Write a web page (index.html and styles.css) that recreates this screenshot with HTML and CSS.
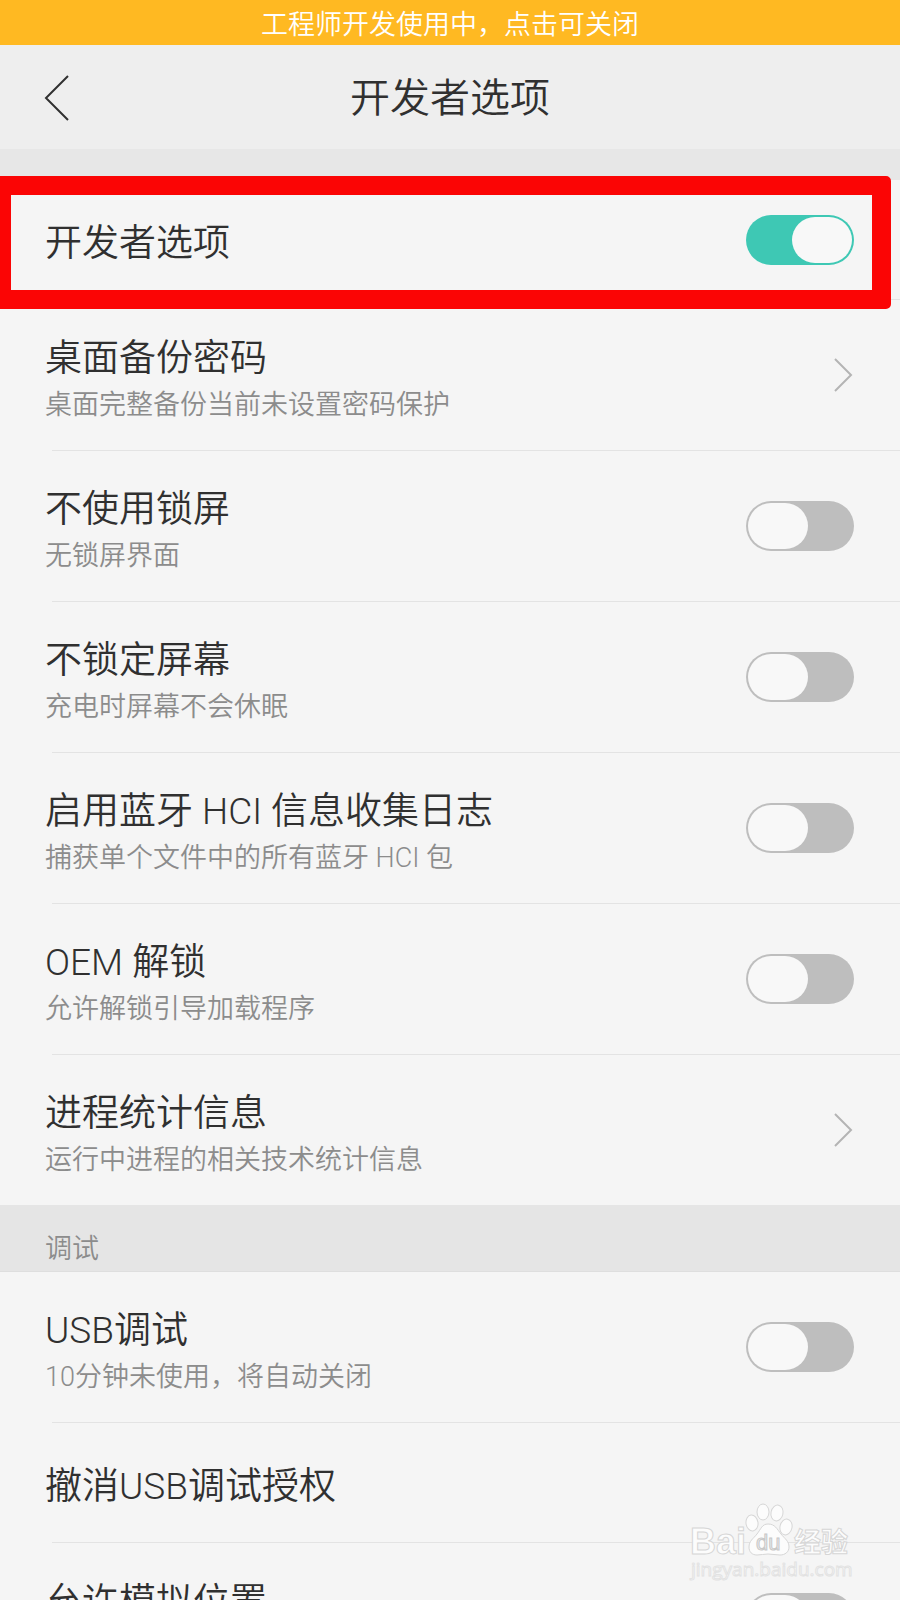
FILE: index.html
```html
<!DOCTYPE html>
<html lang="zh-CN">
<head>
    <meta charset="UTF-8">
    <meta name="viewport" content="width=device-width, initial-scale=1">
    <title>开发者选项</title>
    <link rel="stylesheet" href="styles.css">
</head>
<body>
<div class="screen">
    <button type="button" class="banner">工程师开发使用中，点击可关闭</button>
    <header class="header">
        <button type="button" class="back" aria-label="返回">
            <svg width="26" height="48" viewBox="0 0 26 48"><path d="M24 2L2 24l22 22"/></svg>
        </button>
        <h1 class="heading">开发者选项</h1>
    </header>

    <ul class="list">
        <li class="row single marked">
            <label class="text" for="dev"><span class="name">开发者选项</span></label>
            <input type="checkbox" class="switch" id="dev" checked>
        </li>
        <li class="row">
            <a class="link" href="#backup">
                <span class="text"><span class="name">桌面备份密码</span><span class="desc">桌面完整备份当前未设置密码保护</span></span>
                <svg class="arrow" width="20" height="36" viewBox="0 0 20 36"><path d="M2 2l16 16L2 34"/></svg>
            </a>
        </li>
        <li class="row">
            <label class="text" for="nolock"><span class="name">不使用锁屏</span><span class="desc">无锁屏界面</span></label>
            <input type="checkbox" class="switch" id="nolock">
        </li>
        <li class="row">
            <label class="text" for="awake"><span class="name">不锁定屏幕</span><span class="desc">充电时屏幕不会休眠</span></label>
            <input type="checkbox" class="switch" id="awake">
        </li>
        <li class="row">
            <label class="text" for="hci"><span class="name">启用蓝牙 HCI 信息收集日志</span><span class="desc">捕获单个文件中的所有蓝牙 HCI 包</span></label>
            <input type="checkbox" class="switch" id="hci">
        </li>
        <li class="row">
            <label class="text" for="oem"><span class="name">OEM 解锁</span><span class="desc">允许解锁引导加载程序</span></label>
            <input type="checkbox" class="switch" id="oem">
        </li>
        <li class="row">
            <a class="link" href="#stats">
                <span class="text"><span class="name">进程统计信息</span><span class="desc">运行中进程的相关技术统计信息</span></span>
                <svg class="arrow" width="20" height="36" viewBox="0 0 20 36"><path d="M2 2l16 16L2 34"/></svg>
            </a>
        </li>
    </ul>

    <h2 class="section">调试</h2>

    <ul class="list">
        <li class="row">
            <label class="text" for="usb"><span class="name">USB调试</span><span class="desc">10分钟未使用，将自动关闭</span></label>
            <input type="checkbox" class="switch" id="usb">
        </li>
        <li class="row single">
            <a class="link" href="#revoke"><span class="text"><span class="name">撤消USB调试授权</span></span></a>
        </li>
        <li class="row">
            <label class="text top" for="mock"><span class="name">允许模拟位置</span></label>
            <input type="checkbox" class="switch" id="mock">
        </li>
    </ul>

    <svg class="watermark" width="166" height="84" viewBox="0 0 166 84">
        <text class="logo" x="3" y="54" font-size="36">Bai</text>
        <ellipse cx="65" cy="23" rx="6" ry="8" transform="rotate(-8 65 23)"/>
        <ellipse cx="76" cy="12" rx="6" ry="8"/>
        <ellipse cx="90" cy="13" rx="6" ry="8" transform="rotate(12 90 13)"/>
        <ellipse cx="99" cy="27" rx="6" ry="8" transform="rotate(12 99 27)"/>
        <path d="M81 24c7 0 9 5 13 10s8 7 8 13c0 5-4 8-9 8-4 0-8-1-12-1s-7 1-11 1c-5 0-8-3-8-8 0-6 4-8 8-13s5-10 11-10z"/>
        <text class="du" x="69" y="50" font-size="22">du</text>
        <text class="logo" x="107" y="52" font-size="27">经验</text>
        <text class="site" x="4" y="76" font-size="19">jingyan.baidu.com</text>
    </svg>
</div>
</body>
</html>
```
FILE: styles.css
```css
* {
    box-sizing: border-box;
}
body {
    margin: 0;
    background-color: #f5f5f5;
    color: #303030;
    font-family: Roboto, "Noto Sans CJK SC", sans-serif;
    font-weight: 350;
}
button {
    padding: 0;
    border: 0;
    background: none;
    font: inherit;
}
.screen {
    position: relative;
    height: 100vh;
    overflow: hidden;
}
.banner {
    display: block;
    width: 100%;
    padding-top: 5px;
    background-color: #ffb922;
    color: #fff;
    font-size: 27px;
    line-height: 40px;
}
.header {
    display: grid;
    grid-template-columns: 70px 1fr 70px;
    align-items: center;
    height: 104px;
    padding-top: 2px;
    background-color: #eee;
}
.back {
    justify-self: end;
    height: 48px;
}
.back svg {
    display: block;
    fill: none;
    stroke: #303030;
    stroke-width: 2;
}
.heading {
    margin: 0;
    padding-top: 2px;
    font-size: 40px;
    font-weight: 350;
    line-height: 60px;
    text-align: center;
}
.list {
    margin: 0;
    padding: 0;
    list-style: none;
}
.header + .list {
    border-top: 31px solid #e7e7e7;
}
.row {
    position: relative;
    display: flex;
    align-items: center;
    justify-content: space-between;
    min-height: 151px;
    margin-left: 52px;
    padding-right: 46px;
    border-bottom: 1px solid #e3e3e3;
}
.row:last-child {
    min-height: 150px;
    border-bottom: 0;
}
.single {
    min-height: 120px;
}
/* red frame round the main switch */
.marked::after {
    content: "";
    position: absolute;
    top: -4px;
    right: 9px;
    bottom: -10px;
    left: -60px;
    border: 19px solid #fb0505;
    border-radius: 5px;
    pointer-events: none;
}
.link {
    display: flex;
    flex: 1;
    align-items: center;
    justify-content: space-between;
    color: inherit;
    text-decoration: none;
}
.text {
    display: block;
    margin-left: -7px;
    padding-top: 8px;
}
.top {
    align-self: flex-start;
    padding-top: 34px;
}
.name {
    display: block;
    font-size: 37px;
    line-height: 52px;
}
.desc {
    display: block;
    color: #8c8c8c;
    font-size: 27px;
    line-height: 40px;
}
.arrow {
    margin-right: 1px;
    fill: none;
    stroke: #b4b4b4;
    stroke-width: 2;
}
.switch {
    appearance: none;
    display: flex;
    width: 108px;
    height: 50px;
    margin: 0;
    padding: 2px;
    border-radius: 25px;
    background-color: #bebebe;
}
.switch::before {
    content: "";
    width: 60px;
    border-radius: 23px;
    background-color: #f8f8f8;
}
.switch:checked {
    justify-content: flex-end;
    background-color: #3ec8b4;
}
.section {
    margin: 0;
    padding: 24px 45px 2px;
    border-bottom: 1px solid #dedede;
    background-color: #e5e5e5;
    color: #8c8c8c;
    font-size: 27px;
    font-weight: 350;
    line-height: 40px;
}
.watermark {
    position: absolute;
    right: 47px;
    bottom: 16px;
    fill: #fcfcfc;
    stroke: #d6d6d6;
    stroke-width: 1;
}
.watermark text {
    font-family: "Liberation Sans", "Noto Sans CJK SC", sans-serif;
}
.logo {
    font-weight: 700;
}
.du {
    font-weight: 400;
    fill: #ececec;
    stroke: #c8c8c8;
}
.watermark .site {
    font-family: "Open Sans", sans-serif;
    font-weight: 400;
    stroke: #e2e2e2;
}
```
